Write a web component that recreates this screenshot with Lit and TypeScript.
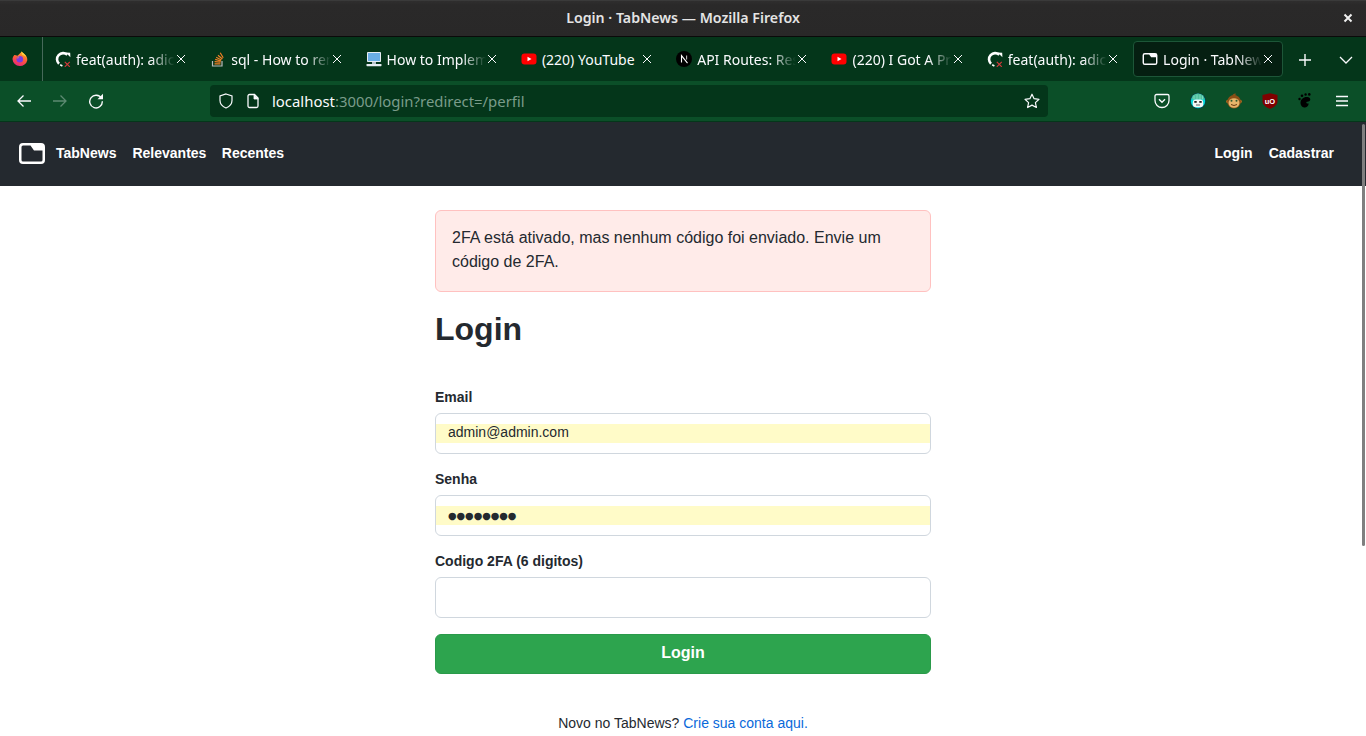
import { LitElement, html, css } from "lit";
import { customElement } from "lit/decorators.js";

const xIcon = html`<svg class="x" viewBox="0 0 12 12" width="12" height="12"><path d="M2 2l8 8M10 2l-8 8" stroke="#fbfbfe" stroke-width="1" fill="none"/></svg>`;

const folderPath = "M4 0H22A4 4 0 0 1 26 4V17A4 4 0 0 1 22 21H4A4 4 0 0 1 0 17V4A4 4 0 0 1 4 0ZM4 2.500A1.500 1.500 0 0 0 2.500 4V17A1.500 1.500 0 0 0 4 18.500H22A1.500 1.500 0 0 0 23.500 17V7.500H15L11.500 2.500Z";

const gh = html`<svg width="16" height="16" viewBox="0 0 16 16" class="fav"><path d="M12.300 3.700A6 6 0 1 0 4 12.700" fill="none" stroke="#fff" stroke-width="2.600"/><path d="M10.800 1.500l4.400.2.200 4.600z" fill="#fff"/><path d="M5.200 13.800l2.200 1.200" stroke="#fff" stroke-width="1.600"/><path d="M9.800 10.800l5 5M14.800 10.800l-5 5" stroke="#d5383a" stroke-width="1.200"/></svg>`;
const so = html`<svg width="16" height="16" viewBox="0 0 16 16" class="fav"><path d="M2.500 10v5h9.500v-5" fill="none" stroke="#bcbbbb" stroke-width="1.200"/><path d="M4.500 12.800h6M4.600 10.600l6 .6M5.200 8.400l5.800 1.600M6.200 6.200l5.200 2.800M8 4.200l4.400 3.800M10.200 1.800l3 5" stroke="#f48024" stroke-width="1.200" fill="none"/></svg>`;
const mon = html`<svg width="16" height="16" viewBox="0 0 16 16" class="fav"><rect x="1" y="1" width="14" height="10" rx=".8" fill="#e6edf2"/><rect x="2" y="2" width="12" height="8" fill="#6aaee6"/><rect x="6" y="11" width="4" height="2" fill="#b8c4cc"/><rect x="0.500" y="13" width="15" height="2.200" rx=".6" fill="#e6edf2"/></svg>`;
const yt = html`<svg width="16" height="16" viewBox="0 0 16 16" class="fav"><rect x="0.500" y="2.500" width="15" height="11" rx="3" fill="#f00"/><path d="M6.500 5.800L10.500 8l-4 2.200z" fill="#fff"/></svg>`;
const nx = html`<svg width="16" height="16" viewBox="0 0 16 16" class="fav"><circle cx="8" cy="8" r="8" fill="#000"/><path d="M5.500 11.500V4.600l6 7.600" fill="none" stroke="#fff" stroke-width="1.100"/><path d="M10.600 4.600v4" stroke="#bbb" stroke-width="1.100"/></svg>`;
const page = html`<svg width="16" height="16" viewBox="-1 -2.500 28 26" class="fav"><path d="${folderPath}" fill="#fbfbfe" fill-rule="evenodd"/></svg>`;

const tabs = [
  { icon: gh, t: "feat(auth): adici" },
  { icon: so, t: "sql - How to rem" },
  { icon: mon, t: "How to Implem" },
  { icon: yt, t: "(220) YouTube", plain: true },
  { icon: nx, t: "API Routes: Res" },
  { icon: yt, t: "(220) I Got A Pr" },
  { icon: gh, t: "feat(auth): adici" },
  { icon: page, t: "Login · TabNew", active: true },
];

@customElement("app-root")
export class AppRoot extends LitElement {
  static styles = css`
    :host { display: block; height: 736px; overflow: hidden; position: relative; background: #fff; font-family: "Liberation Sans", Arial, sans-serif; color: #24292f; }
    * { box-sizing: border-box; }
    .title { height: 37px; background: linear-gradient(#2f2e2e, #2a2929 4px, #292828); border-bottom: 1px solid #0a0a0a; border-top: 1px solid #3a3a3a; display: flex; align-items: center; justify-content: center; position: relative; font: 600 14.200px "Noto Sans", sans-serif; color: #e4e4e4; padding-bottom: 2px; }
    .wclose { position: absolute; right: 12px; top: 11px; display: flex; }
    .tabbar { height: 44px; background: #04361a; display: flex; align-items: center; font: 14px "Noto Sans", sans-serif; color: #fbfbfe; }
    .ff { width: 43px; height: 44px; border-right: 1px solid #47695a; display: flex; align-items: center; padding-left: 12px; flex: none; margin-right: 3px; }
    .tab { width: 150.300px; height: 36px; margin-right: 5px; flex: none; display: flex; align-items: center; padding-left: 9px; position: relative; border: 1px solid transparent; border-radius: 4px; }
    .tab.active { background: #051f11; border-color: #1d5638; }
    .fav { flex: none; margin-right: 5px; margin-left: -1px; }
    .tlabel { flex: 1; overflow: hidden; white-space: nowrap; -webkit-mask-image: linear-gradient(to right, #000 calc(100% - 24px), transparent 100%); mask-image: linear-gradient(to right, #000 calc(100% - 24px), transparent 100%); margin-right: 20px; line-height: 20px; margin-top: 1px; }
    .plain { -webkit-mask-image: none; mask-image: none; overflow: visible; }
    .x { position: absolute; right: 8px; top: 11px; }
    .tright { display: flex; align-items: center; flex: 1; padding-top: 2px; }
    .plus { margin-left: 10px; }
    .chev { margin-left: 27px; }
    .toolbar { height: 41px; background: #0b4f28; display: flex; align-items: center; position: relative; padding-bottom: 1px; border-bottom: 1px solid #04361a; }
    .nav-btns { display: flex; width: 210px; padding-left: 16px; gap: 20px; flex: none; }
    .urlbar { width: 838px; height: 32px; background: #04361a; border-radius: 4px; display: flex; align-items: center; padding-left: 8px; font: 14.900px "Noto Sans", sans-serif; color: #fbfbfe; flex: none; }
    .urlbar .dim { color: #7a9c8a; }
    .urltext { margin-left: 11px; flex: 1; line-height: 20px; margin-top: 1px; }
    .doc { margin-left: 11px; }
    .star { margin-right: 8px; }
    .rt { display: flex; margin-left: 106px; gap: 20px; }
    .rt svg { display: block; }
    .nav { height: 64px; background: #24292f; display: flex; align-items: center; padding: 0 32px 2px 19px; color: #fff; font-weight: 700; font-size: 14px; gap: 16px; }
    .logo { display: flex; align-items: center; gap: 11px; }
    .tight { margin-left: -0.600px; }
    .spacer { flex: 1; }
    .main { width: 496px; margin: 24px auto 0; }
    .alert { background: #ffebe9; border: 1px solid #ffc1c0; border-radius: 6px; padding: 15px 16px 17px; font-size: 16px; line-height: 24px; height: 82px; }
    h1 { font-size: 32px; line-height: 40px; font-weight: 700; margin: 17px 0 0; height: 40px; }
    form { margin-top: 38px; display: flex; flex-direction: column; }
    label { font-size: 14px; font-weight: 700; line-height: 20px; height: 20px; margin-bottom: 6px; display: block; }
    .field { margin-bottom: 15px; }
    .field.last { margin-bottom: 16px; }
    .input { height: 41px; border: 1px solid #d0d7de; border-radius: 6px; background: #fff; display: flex; align-items: flex-start; font-size: 14px; }
    .fill { flex: 1; height: 19px; background: #fffbc8; padding-left: 12px; line-height: 17px; white-space: nowrap; margin-top: 10px; }
    .dots { color: #24292f; line-height: 19px; font-family: "DejaVu Sans", sans-serif; font-size: 9.800px; }
    .btn { height: 40px; border-radius: 6px; background: #2da44e; border: 1px solid #2a9a4a; color: #fff; font-weight: 700; font-size: 16px; display: flex; align-items: center; justify-content: center; padding-bottom: 3px; }
    .foot { text-align: center; font-size: 14px; line-height: 20px; margin-top: 39px; }
    .foot a { color: #0969da; text-decoration: none; }
    .scroll { position: absolute; right: 1px; top: 124px; width: 3px; height: 422px; background: #7f7f7f; border-radius: 2px; }
  `;

  render() {
    return html`
      <div class="title">Login · TabNews — Mozilla Firefox
        <span class="wclose"><svg width="12" height="12" viewBox="0 0 12 12"><path d="M2.500 2.500l7 7M9.500 2.500l-7 7" stroke="#f0f0f0" stroke-width="2"/></svg></span>
      </div>
      <div class="tabbar">
        <div class="ff">
          <svg width="16" height="16" viewBox="0 0 16 16"><defs><linearGradient id="ffg" x1="0.700" y1="0" x2="0.300" y2="1"><stop offset="0" stop-color="#ffb51f"/><stop offset=".5" stop-color="#ff5a3a"/><stop offset="1" stop-color="#e8237e"/></linearGradient></defs><path d="M9.500 .4c1.200 1.500 3.200 2.400 4.400 4.200 1.100 1.500 1.500 3 1.400 4.600A7.500 7.500 0 0 1 .5 8.300C.5 6.600 1.200 5 2.400 3.900c.6 0 2 .2 3 .8C6.400 3.600 8.800 2 9.500 .4z" fill="url(#ffg)"/><circle cx="7.800" cy="8.300" r="3.300" fill="#7a3ae0"/><path d="M5 7.500a3 3 0 0 1 3-2.200c-1 .3-1.500 1-1.700 1.900z" fill="#ff9a3c"/><path d="M9.300 .4c1.500 1.100 4.200 3 5 5.800-1-1-2.500-2.200-4.200-2.500z" fill="#ffd23f"/></svg>
        </div>
        ${tabs.map(t => html`<div class="tab ${t.active ? "active" : ""}">${t.icon}<span class="tlabel ${t.plain ? "plain" : ""}">${t.t}</span>${xIcon}</div>`)}
        <div class="tright">
          <svg class="plus" width="14" height="14" viewBox="0 0 14 14"><path d="M7 1v12M1 7h12" stroke="#fbfbfe" stroke-width="1.400"/></svg>
          <svg class="chev" width="14" height="14" viewBox="0 0 14 14"><path d="M1 4l6 6 6-6" stroke="#fbfbfe" stroke-width="1.300" fill="none"/></svg>
        </div>
      </div>
      <div class="toolbar">
        <div class="nav-btns">
          <svg width="16" height="16" viewBox="0 0 16 16"><path d="M15 8H2M7.500 2.500L2 8l5.500 5.500" stroke="#fbfbfe" stroke-width="1.300" fill="none"/></svg>
          <svg width="16" height="16" viewBox="0 0 16 16"><path d="M1 8h13M8.500 2.500L14 8l-5.500 5.500" stroke="#5d8a72" stroke-width="1.300" fill="none"/></svg>
          <svg width="16" height="16" viewBox="0 0 16 16"><path d="M13.500 5.500a6.300 6.300 0 1 0 .8 2.700" stroke="#fbfbfe" stroke-width="1.400" fill="none"/><path d="M9.500 6.200h5.500V.7z" fill="#fbfbfe"/></svg>
        </div>
        <div class="urlbar">
          <svg width="16" height="16" viewBox="0 0 16 16"><path d="M8 1l6 2v4.500c0 3.500-2.800 6.200-6 7.500-3.200-1.300-6-4-6-7.500V3z" fill="none" stroke="#fbfbfe" stroke-width="1.200"/></svg>
          <svg class="doc" width="16" height="16" viewBox="0 0 16 16"><path d="M3 3a1.500 1.500 0 0 1 1.500-1.500h5L13 5v8a1.500 1.500 0 0 1-1.500 1.500h-7A1.500 1.500 0 0 1 3 13z" fill="none" stroke="#fbfbfe" stroke-width="1.300"/><path d="M9 1.500V6h4.500" fill="#fbfbfe" stroke="#fbfbfe" stroke-width=".8"/></svg>
          <span class="urltext">localhost<span class="dim">:3000/login?redirect=/perfil</span></span>
          <svg class="star" width="16" height="16" viewBox="0 0 16 16"><path d="M8 1.200l2.100 4.500 4.900.6-3.600 3.300 1 4.900L8 12.100l-4.400 2.400 1-4.900L1 6.300l4.900-.6z" fill="none" stroke="#fbfbfe" stroke-width="1.200" stroke-linejoin="round"/></svg>
        </div>
        <div class="rt">
          <svg width="16" height="16" viewBox="0 0 16 16"><path d="M2.500 1.500h11a1.500 1.500 0 0 1 1.500 1.500v4.500a7 7 0 0 1-14 0V3a1.500 1.500 0 0 1 1.500-1.500z" fill="none" stroke="#fbfbfe" stroke-width="1.300"/><path d="M5 6.200l3 3 3-3" stroke="#fbfbfe" stroke-width="1.400" fill="none"/></svg>
          <svg width="16" height="16" viewBox="0 0 16 16"><circle cx="8" cy="8" r="8" fill="#0a3f4a"/><circle cx="8" cy="8" r="7.200" fill="#00dcdc"/><path d="M1.500 6.500a6.500 6 0 0 1 13 0z" fill="#4fbf9c"/><path d="M4 2.500v4M7 1.500v5M10 1.500v5M12.500 2.800v3.700" stroke="#8fe3cb" stroke-width=".7"/><rect x="2.800" y="6.500" width="10.400" height="7.800" rx="3" fill="#f6f6f6"/><rect x="4.300" y="8" width="2.400" height="1.800" fill="#222"/><rect x="9.300" y="8" width="2.400" height="1.800" fill="#222"/><path d="M6 12h4" stroke="#555" stroke-width=".9"/></svg>
          <svg width="16" height="16" viewBox="0 0 16 16"><circle cx="1.800" cy="8.500" r="1.700" fill="#b06a20"/><circle cx="14.200" cy="8.500" r="1.700" fill="#b06a20"/><circle cx="8" cy="8.800" r="6.800" fill="#8a4f16"/><path d="M6 2.500q2-2.500 4-1.800-1 .8-.5 2z" fill="#8a4f16"/><ellipse cx="8" cy="10" rx="5.500" ry="4.800" fill="#e6b56a"/><circle cx="5.500" cy="7.800" r="1" fill="#2e5a2e"/><circle cx="10.500" cy="7.800" r="1" fill="#2e5a2e"/><path d="M5 11.500q3 2 6 0" stroke="#6b3a10" fill="none"/></svg>
          <svg width="16" height="16" viewBox="0 0 16 16"><path d="M8 .2l7.500 1.800v6.300c0 3.500-3.300 6-7.500 7.500C3.800 14.300.5 11.800.5 8.300V2z" fill="#800000"/><text x="8" y="10.500" text-anchor="middle" font-size="7.500" font-weight="700" font-family="Liberation Sans" fill="#fff">uO</text></svg>
          <svg width="16" height="16" viewBox="0 0 16 16"><path d="M2.500 10c0-4 3.300-6.500 7-6 3.200.5 3.500 3.200 1.700 4.200-1.200.6-2.300.2-2.800 1-.4.800.6 1.500 2.300 1.300-.2 2.800-2.800 4.500-4.600 4C4 14 2.500 12.300 2.500 10z" fill="#000"/><circle cx="1.500" cy="6" r="1.200" fill="#000"/><circle cx="4" cy="2.800" r="1.300" fill="#000"/><circle cx="7.600" cy="1.500" r="1.200" fill="#000"/><circle cx="11.300" cy="1.400" r="1.300" fill="#000"/></svg>
          <svg width="16" height="16" viewBox="0 0 16 16"><path d="M2 3.500h12M2 8h12M2 12.500h12" stroke="#fbfbfe" stroke-width="1.300"/></svg>
        </div>
      </div>
      <div class="nav">
        <div class="logo">
          <svg width="26" height="21" viewBox="0 0 26 21"><path d="${folderPath}" fill="#fff" fill-rule="evenodd"/></svg>
          <span>TabNews</span>
        </div>
        <span>Relevantes</span>
        <span class="tight">Recentes</span>
        <span class="spacer"></span>
        <span>Login</span>
        <span>Cadastrar</span>
      </div>
      <div class="main">
        <div class="alert">2FA está ativado, mas nenhum código foi enviado. Envie um código de 2FA.</div>
        <h1>Login</h1>
        <form>
          <div class="field"><label>Email</label><div class="input"><div class="fill">admin@admin.com</div></div></div>
          <div class="field"><label>Senha</label><div class="input"><div class="fill"><span class="dots">●●●●●●●●</span></div></div></div>
          <div class="field last"><label>Codigo 2FA (6 digitos)</label><div class="input"></div></div>
          <div class="btn">Login</div>
        </form>
        <div class="foot">Novo no TabNews? <a>Crie sua conta aqui.</a></div>
      </div>
      <div class="scroll"></div>
    `;
  }
}
